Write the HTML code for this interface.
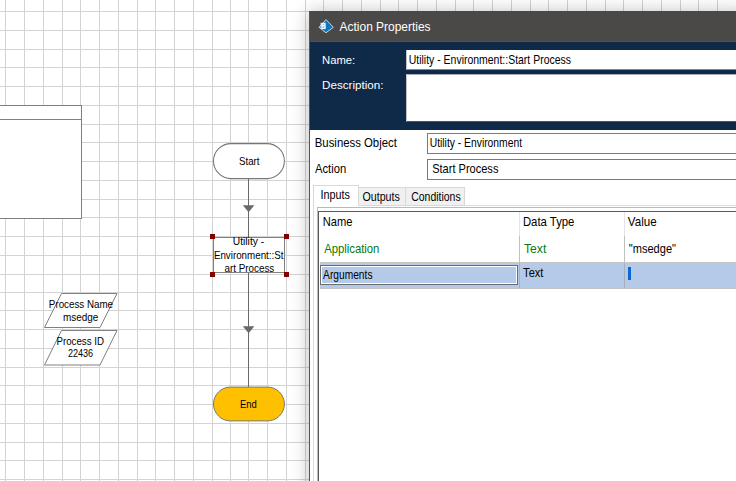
<!DOCTYPE html>
<html><head><meta charset="utf-8"><title>Action Properties</title>
<style>
html,body{margin:0;padding:0;width:736px;height:481px;overflow:hidden;}
#root{position:absolute;left:0;top:0;width:736px;height:481px;overflow:hidden;background:#fff;}
body{width:736px;height:481px;overflow:hidden;background:#fff;position:relative;font-family:"Liberation Sans",sans-serif;color:#000;}
.abs{position:absolute;}
#grid{position:absolute;left:0;top:0;}
.dt{position:absolute;font-size:10.2px;line-height:13.6px;text-align:center;white-space:nowrap;color:#000;letter-spacing:-0.25px;}
.tx{position:absolute;line-height:16px;white-space:nowrap;transform-origin:0 0;}
#dlg{position:absolute;left:309px;top:11px;width:440px;height:480px;background:#fff;box-shadow:0 1px 17px rgba(0,0,0,0.27);}
#dlgb{position:absolute;left:0;top:0;width:1px;height:480px;background:#585654;}
#title{position:absolute;left:0;top:0;width:440px;height:31px;background:#4b4947;}
#navy{position:absolute;left:1px;top:31px;width:439px;height:88px;background:#0f2a48;}
.tb{position:absolute;background:#fff;}
.inp{position:absolute;background:#fff;border:1px solid #7a7a7a;box-sizing:border-box;}
.tab{position:absolute;box-sizing:border-box;border:1px solid #d9d9d9;background:#f0f0f0;}
</style></head><body>
<div id="root">
<svg id="grid" width="736" height="481" viewBox="0 0 736 481" shape-rendering="crispEdges" fill="#d3d3d3"><rect x="5" y="0" width="1" height="481"/><rect x="24" y="0" width="1" height="481"/><rect x="43" y="0" width="1" height="481"/><rect x="62" y="0" width="1" height="481"/><rect x="80" y="0" width="1" height="481"/><rect x="99" y="0" width="1" height="481"/><rect x="118" y="0" width="1" height="481"/><rect x="137" y="0" width="1" height="481"/><rect x="155" y="0" width="1" height="481"/><rect x="174" y="0" width="1" height="481"/><rect x="193" y="0" width="1" height="481"/><rect x="212" y="0" width="1" height="481"/><rect x="230" y="0" width="1" height="481"/><rect x="248" y="0" width="1" height="481"/><rect x="267" y="0" width="1" height="481"/><rect x="286" y="0" width="1" height="481"/><rect x="305" y="0" width="1" height="481"/><rect x="323" y="0" width="1" height="481"/><rect x="342" y="0" width="1" height="481"/><rect x="361" y="0" width="1" height="481"/><rect x="380" y="0" width="1" height="481"/><rect x="398" y="0" width="1" height="481"/><rect x="417" y="0" width="1" height="481"/><rect x="436" y="0" width="1" height="481"/><rect x="455" y="0" width="1" height="481"/><rect x="473" y="0" width="1" height="481"/><rect x="492" y="0" width="1" height="481"/><rect x="511" y="0" width="1" height="481"/><rect x="530" y="0" width="1" height="481"/><rect x="548" y="0" width="1" height="481"/><rect x="567" y="0" width="1" height="481"/><rect x="586" y="0" width="1" height="481"/><rect x="605" y="0" width="1" height="481"/><rect x="623" y="0" width="1" height="481"/><rect x="642" y="0" width="1" height="481"/><rect x="661" y="0" width="1" height="481"/><rect x="680" y="0" width="1" height="481"/><rect x="698" y="0" width="1" height="481"/><rect x="717" y="0" width="1" height="481"/><rect x="0" y="11" width="736" height="1"/><rect x="0" y="30" width="736" height="1"/><rect x="0" y="49" width="736" height="1"/><rect x="0" y="67" width="736" height="1"/><rect x="0" y="86" width="736" height="1"/><rect x="0" y="105" width="736" height="1"/><rect x="0" y="124" width="736" height="1"/><rect x="0" y="142" width="736" height="1"/><rect x="0" y="161" width="736" height="1"/><rect x="0" y="180" width="736" height="1"/><rect x="0" y="199" width="736" height="1"/><rect x="0" y="217" width="736" height="1"/><rect x="0" y="236" width="736" height="1"/><rect x="0" y="255" width="736" height="1"/><rect x="0" y="274" width="736" height="1"/><rect x="0" y="292" width="736" height="1"/><rect x="0" y="310" width="736" height="1"/><rect x="0" y="329" width="736" height="1"/><rect x="0" y="348" width="736" height="1"/><rect x="0" y="367" width="736" height="1"/><rect x="0" y="385" width="736" height="1"/><rect x="0" y="404" width="736" height="1"/><rect x="0" y="423" width="736" height="1"/><rect x="0" y="442" width="736" height="1"/><rect x="0" y="460" width="736" height="1"/><rect x="0" y="479" width="736" height="1"/></svg>

<!-- left box -->
<div class="abs" style="left:-10px;top:105px;width:92px;height:114px;box-sizing:border-box;border:1px solid #808080;background:#fff;"></div>
<div class="abs" style="left:0;top:119px;width:81px;height:1px;background:#808080;"></div>

<!-- flow shapes -->
<svg class="abs" style="left:0;top:0" width="310" height="481" viewBox="0 0 310 481">
  <line x1="248.5" y1="178" x2="248.5" y2="237" stroke="#696969" stroke-width="1" shape-rendering="crispEdges"/>
  <line x1="248.5" y1="272" x2="248.5" y2="387" stroke="#696969" stroke-width="1" shape-rendering="crispEdges"/>
  <polygon points="242.8,205.2 254.4,205.2 248.6,212.2" fill="#696969"/>
  <polygon points="242.8,326.2 254.4,326.2 248.6,333.2" fill="#696969"/>
  <rect x="213.5" y="143.6" width="70.9" height="35" rx="17.5" ry="17.5" fill="#fff" stroke="#767676" stroke-width="1.05"/>
  <rect x="213.5" y="237.5" width="71" height="35" fill="#fff" stroke="#808080" stroke-width="1"/>
  <rect x="213.5" y="387.1" width="70.9" height="33.8" rx="16.9" ry="16.9" fill="#ffc000" stroke="#7a7870" stroke-width="1"/>
  <g fill="#800000" shape-rendering="crispEdges">
    <rect x="210" y="234" width="5" height="5"/><rect x="284" y="234" width="5" height="5"/>
    <rect x="210" y="272" width="5" height="5"/><rect x="284" y="272" width="5" height="5"/>
  </g>
  <polygon points="61.5,293.5 117,293.5 100,327.5 44.5,327.5" fill="#fff" stroke="#808080" stroke-width="1"/>
  <polygon points="61.5,330.5 117,330.5 100,365 44.5,365" fill="#fff" stroke="#808080" stroke-width="1"/>
</svg>

<!-- dialog -->
<div id="dlg">
  <div id="title">
    <svg class="abs" style="left:8px;top:7px" width="18" height="17" viewBox="0 0 18 17">
      <polygon points="2,9.3 9,1.6 16.3,9.3 9,14.8" fill="#0f75bc" stroke="#e8f0f8" stroke-width="0.8" stroke-linejoin="round"/>
      <rect x="3.3" y="4.7" width="5.6" height="6.4" fill="#b8d8f0" opacity="0.75"/>
      <text x="4.1" y="10.9" font-family="Liberation Sans, sans-serif" font-weight="bold" font-size="8.6" fill="#fff" textLength="4.7" lengthAdjust="spacingAndGlyphs">B</text>
    </svg>
  </div>
  <div id="navy"></div>
  <div class="abs" style="left:1px;top:30px;width:439px;height:1px;background:#544e49;"></div>
  <div id="dlgb"></div>
  <div class="tb" style="left:97px;top:39px;width:350px;height:19px;border-left:1px solid #c2c4c8;border-bottom:1px solid #7f8996;"></div>
  <div class="tb" style="left:97px;top:63px;width:350px;height:46px;border-left:1px solid #c2c4c8;border-top:1px solid #a9afb8;border-bottom:1px solid #42556b;"></div>

  <div class="inp" style="left:118px;top:122px;width:330px;height:21px;"></div>
  <div class="inp" style="left:118px;top:148px;width:330px;height:21px;"></div>

  <!-- tabs -->
  <div class="abs" style="left:4px;top:194px;width:440px;height:300px;box-sizing:border-box;border:1px solid #dcdcdc;background:#fff;"></div>
  <div class="tab" style="left:49px;top:176px;width:48px;height:19px;"></div>
  <div class="tab" style="left:96px;top:176px;width:60px;height:19px;"></div>
  <div class="tab" style="left:4px;top:174px;width:46px;height:21px;background:#fff;border-bottom:none;"></div>

  <!-- list -->
  <div class="abs" style="left:8px;top:196px;width:440px;height:300px;box-sizing:border-box;border:1px solid #a9bddb;background:#fff;"></div>
  <div class="abs" style="left:9px;top:200px;width:440px;height:300px;box-sizing:border-box;border:1px solid #5a5a5a;background:#fff;"></div>
  <div class="abs" style="left:210px;top:201px;width:1px;height:24px;background:#e4e4e4;"></div>
  <div class="abs" style="left:315px;top:201px;width:1px;height:24px;background:#e4e4e4;"></div>
  <div class="abs" style="left:210px;top:225px;width:1px;height:26px;background:#c0c0c0;"></div>
  <div class="abs" style="left:315px;top:225px;width:1px;height:26px;background:#c0c0c0;"></div>
  <div class="abs" style="left:11px;top:251px;width:430px;height:27px;background:#b4cae8;border-top:1px solid #c8c8c8;border-bottom:1px solid #c4c4c4;box-sizing:border-box;"></div>
  <div class="abs" style="left:210px;top:252px;width:1px;height:25px;background:#a9b0bc;"></div>
  <div class="abs" style="left:315px;top:252px;width:1px;height:25px;background:#a9b0bc;"></div>
  <div class="abs" style="left:11px;top:254px;width:198px;height:20px;box-sizing:border-box;border:1px solid #6b6b6b;background:#fff;"><div style="position:absolute;left:1px;top:1px;right:1px;bottom:1px;background:#b4cae8;"></div></div>
  <div class="abs" style="left:319px;top:256px;width:3px;height:13px;background:#0868d8;"></div>
</div>
<div id="ttl" class="tx" style="left:0;top:0;font-size:12.8px;color:#fff;transform:translate(339.61px,19.11px) scaleX(0.9330);"><span class="f">A</span>ction Properties</div>
<div id="lname" class="tx" style="left:0;top:0;font-size:11.3px;color:#fff;transform:translate(322.04px,52.18px) scaleX(0.9949);"><span class="f">N</span>ame:</div>
<div id="ldesc" class="tx" style="left:0;top:0;font-size:11.3px;color:#fff;transform:translate(322.03px,77.08px) scaleX(1.0290);"><span class="f">D</span>escription:</div>
<div id="fname" class="tx" style="left:0;top:0;font-size:12.2px;color:#000;transform:translate(408.71px,52.12px) scaleX(0.8587);"><span class="f">U</span>tility - Environment::Start Process</div>
<div id="lbo" class="tx" style="left:0;top:0;font-size:12.2px;color:#000;transform:translate(314.78px,135.17px) scaleX(0.9320);"><span class="f">B</span>usiness Object</div>
<div id="lact" class="tx" style="left:0;top:0;font-size:12.2px;color:#000;transform:translate(314.99px,161.07px) scaleX(0.9214);"><span class="f">A</span>ction</div>
<div id="fbo" class="tx" style="left:0;top:0;font-size:12.2px;color:#000;transform:translate(429.71px,135.12px) scaleX(0.8464);"><span class="f">U</span>tility - Environment</div>
<div id="fact" class="tx" style="left:0;top:0;font-size:12.2px;color:#000;transform:translate(432.15px,161.17px) scaleX(0.9057);"><span class="f">S</span>tart Process</div>
<div id="tin" class="tx" style="left:0;top:0;font-size:12.2px;color:#000;transform:translate(320.39px,187.22px) scaleX(0.8850);"><span class="f">I</span>nputs</div>
<div id="tout" class="tx" style="left:0;top:0;font-size:12.2px;color:#000;transform:translate(362.49px,189.17px) scaleX(0.8723);"><span class="f">O</span>utputs</div>
<div id="tcon" class="tx" style="left:0;top:0;font-size:12.2px;color:#000;transform:translate(411.19px,189.17px) scaleX(0.8585);"><span class="f">C</span>onditions</div>
<div id="hname" class="tx" style="left:0;top:0;font-size:12.2px;color:#000;transform:translate(322.77px,214.12px) scaleX(0.9145);"><span class="f">N</span>ame</div>
<div id="hdt" class="tx" style="left:0;top:0;font-size:12.2px;color:#000;transform:translate(522.92px,214.12px) scaleX(0.9308);"><span class="f">D</span>ata Type</div>
<div id="hval" class="tx" style="left:0;top:0;font-size:12.2px;color:#000;transform:translate(627.85px,214.12px) scaleX(0.9510);"><span class="f">V</span>alue</div>
<div id="rapp" class="tx" style="left:0;top:0;font-size:12.2px;color:#067a0c;transform:translate(324.13px,241.07px) scaleX(0.9265);"><span class="f">A</span>pplication</div>
<div id="rtext" class="tx" style="left:0;top:0;font-size:12.2px;color:#067a0c;transform:translate(524.06px,241.07px) scaleX(0.9930);"><span class="f">T</span>ext</div>
<div id="rval" class="tx" style="left:0;top:0;font-size:12.2px;color:#000;transform:translate(628.81px,241.07px) scaleX(0.9072);"><span class="f">&quot;</span>msedge&quot;</div>
<div id="rarg" class="tx" style="left:0;top:0;font-size:12.2px;color:#000;transform:translate(323.11px,267.12px) scaleX(0.8378);"><span class="f">A</span>rguments</div>
<div id="rtext2" class="tx" style="left:0;top:0;font-size:12.2px;color:#000;transform:translate(523.11px,265.07px) scaleX(0.9100);"><span class="f">T</span>ext</div>
<div id="dstart" class="tx" style="left:0;top:0;font-size:10.17px;color:#000;transform:translate(238.96px,154.23px) scaleX(0.9552);"><span class="f">S</span>tart</div>
<div id="du1" class="tx" style="left:0;top:0;font-size:10.17px;color:#000;transform:translate(232.79px,234.23px) scaleX(1.0105);"><span class="f">U</span>tility -</div>
<div id="du2" class="tx" style="left:0;top:0;font-size:10.17px;color:#000;transform:translate(213.88px,248.23px) scaleX(0.9634);"><span class="f">E</span>nvironment::St</div>
<div id="du3" class="tx" style="left:0;top:0;font-size:10.17px;color:#000;transform:translate(224.56px,261.23px) scaleX(0.9674);"><span class="f">a</span>rt Process</div>
<div id="dend" class="tx" style="left:0;top:0;font-size:10.17px;color:#000;transform:translate(239.95px,397.23px) scaleX(0.9277);"><span class="f">E</span>nd</div>
<div id="dp1" class="tx" style="left:0;top:0;font-size:10.17px;color:#000;transform:translate(48.85px,297.13px) scaleX(0.9635);"><span class="f">P</span>rocess Name</div>
<div id="dp2" class="tx" style="left:0;top:0;font-size:10.17px;color:#000;transform:translate(62.91px,310.23px) scaleX(0.9809);"><span class="f">m</span>sedge</div>
<div id="dp3" class="tx" style="left:0;top:0;font-size:10.17px;color:#000;transform:translate(56.48px,334.08px) scaleX(0.9558);"><span class="f">P</span>rocess ID</div>
<div id="dp4" class="tx" style="left:0;top:0;font-size:10.17px;color:#000;transform:translate(67.90px,346.23px) scaleX(0.8928);"><span class="f">2</span>2436</div>
</div>
</body></html>
